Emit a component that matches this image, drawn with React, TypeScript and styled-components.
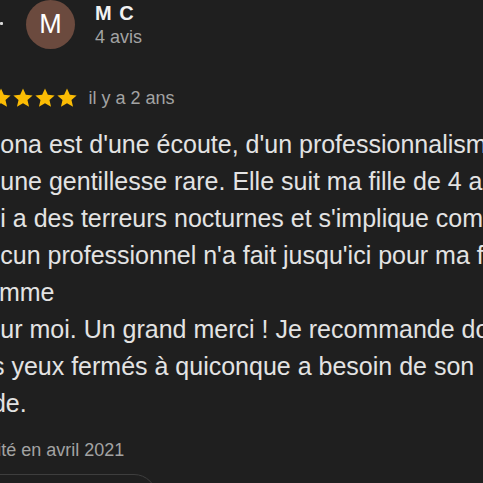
import React from "react"
import styled, { createGlobalStyle } from "styled-components"

const GlobalStyle = createGlobalStyle`
  html, body {
    margin: 0;
    padding: 0;
    background: #1f1f1f;
    overflow: hidden;
  }
  body {
    font-family: "Liberation Sans", Arial, Helvetica, sans-serif;
    -webkit-font-smoothing: antialiased;
  }
`

const lines = [
  "Leona est d'une écoute, d'un professionnalisme",
  "et une gentillesse rare. Elle suit ma fille de 4 ans",
  "qui a des terreurs nocturnes et s'implique comme",
  "aucun professionnel n'a fait jusqu'ici pour ma fille",
  "comme",
  "pour moi. Un grand merci ! Je recommande donc",
  "les yeux fermés à quiconque a besoin de son",
  "aide.",
]

const Star = () => (
  <svg width="22" height="22" viewBox="0 0 24 24">
    <path fill="#fbbc04" d="M12 1.6l3.1 6.9 7.4.7-5.6 5 1.7 7.4L12 17.7l-6.6 3.9 1.7-7.4-5.6-5 7.4-.7z" />
  </svg>
)

export default function App() {
  return (
    <>
      <GlobalStyle />
      <Card>
        <Header>
          <EdgeMark />
          <Avatar>M</Avatar>
          <Author>
            <Name>M C</Name>
            <Count>4 avis</Count>
          </Author>
        </Header>
        <Rating>
          <Stars>
            {[0, 1, 2, 3, 4].map((i) => (
              <Star key={i} />
            ))}
          </Stars>
          <When>il y a 2 ans</When>
        </Rating>
        <Body>
          {lines.map((l, i) => (
            <Line key={i}>{l}</Line>
          ))}
        </Body>
        <Visited>Visité en avril 2021</Visited>
        <Action />
      </Card>
    </>
  )
}

const Card = styled.div`
  margin-left: -27.5px;
  width: 640px;
  color: #e3e3e3;
`

const Header = styled.div`
  display: flex;
  align-items: flex-start;
  height: 50px;
`

const EdgeMark = styled.span`
  width: 3px;
  height: 3px;
  margin: 22px 0 0 27px;
  background: #d8d8d8;
  border-radius: 1px;
`

const Avatar = styled.div`
  width: 49px;
  height: 49px;
  margin-left: 23.5px;
  border-radius: 50%;
  background: #6b4a3e;
  color: #ffffff;
  font-size: 27px;
  display: flex;
  align-items: center;
  justify-content: center;
`

const Author = styled.div`
  display: flex;
  flex-direction: column;
  margin-left: 20px;
  margin-top: 1px;
`

const Name = styled.div`
  font-size: 20px;
  font-weight: 700;
  letter-spacing: 1px;
  color: #f1f1f1;
  line-height: 24px;
`

const Count = styled.div`
  font-size: 18px;
  color: #a3a3a3;
  line-height: 25px;
`

const Rating = styled.div`
  display: flex;
  align-items: center;
  margin-top: 37px;
  height: 22px;
`

const Stars = styled.div`
  display: flex;
  margin-left: -5px;
`

const When = styled.span`
  font-size: 18px;
  color: #a3a3a3;
  margin-left: 11px;
`

const Body = styled.div`
  margin-top: 17px;
  font-size: 25px;
  line-height: 37px;
`

const Line = styled.div`
  white-space: nowrap;
`

const Visited = styled.div`
  margin-top: 17px;
  font-size: 18px;
  line-height: 22px;
  color: #a3a3a3;
`

const Action = styled.div`
  margin-top: 13px;
  width: 182px;
  height: 44px;
  border: 1.5px solid #3e3e3e;
  border-radius: 24px;
`
